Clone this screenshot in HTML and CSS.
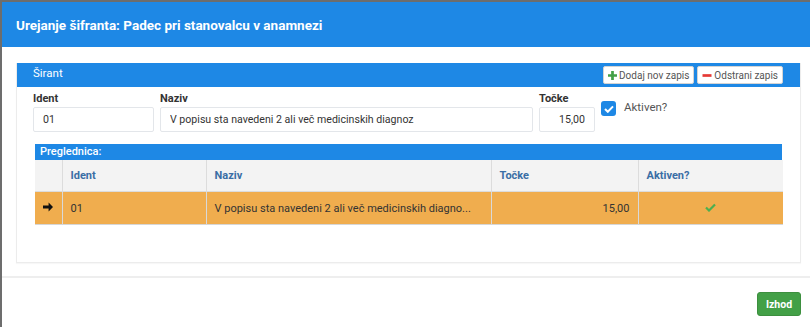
FILE: index.html
```html
<!DOCTYPE html>
<html>
<head>
    <title>Urejanje šifranta</title>
    <link rel="stylesheet" href="styles.css">
</head>
<body>
    <div class="modal">
        <div class="modal-header">
            <h1>Urejanje šifranta: Padec pri stanovalcu v anamnezi</h1>
        </div>

        <div class="modal-body">
            <div class="panel">
                <div class="panel-heading">
                    <span>Širant</span>
                    <div class="panel-tools">
                        <button class="btn-tool">
                            <svg width="9" height="9" viewBox="0 0 10 10"><path d="M3.5 0h3v3.5H10v3H6.5V10h-3V6.5H0v-3h3.5z" fill="#43a047"/></svg>
                            Dodaj nov zapis
                        </button>
                        <button class="btn-tool">
                            <svg width="10" height="9" viewBox="0 0 10 10"><path d="M0 3.5h10v3H0z" fill="#e53935"/></svg>
                            Odstrani zapis
                        </button>
                    </div>
                </div>

                <div class="panel-body">
                    <div class="form-row">
                        <div class="field">
                            <label>Ident</label>
                            <input class="input" type="text" value="01">
                        </div>
                        <div class="field">
                            <label>Naziv</label>
                            <input class="input" type="text" value="V popisu sta navedeni 2 ali več medicinskih diagnoz">
                        </div>
                        <div class="field">
                            <label>Točke</label>
                            <input class="input input-num" type="text" value="15,00">
                        </div>
                        <div class="check-field">
                            <span class="checkbox">
                                <svg width="10" height="8" viewBox="0 0 10 8"><path d="M1 4l2.8 2.8L9 1.4" fill="none" stroke="#fff" stroke-width="2"/></svg>
                            </span>
                            <span class="check-label">Aktiven?</span>
                        </div>
                    </div>

                    <div class="grid">
                        <div class="grid-title">Preglednica:</div>
                        <table>
                            <colgroup>
                                <col style="width: 27px">
                                <col style="width: 144px">
                                <col style="width: 285px">
                                <col style="width: 147px">
                                <col style="width: 145px">
                            </colgroup>
                            <thead>
                                <tr>
                                    <th></th>
                                    <th>Ident</th>
                                    <th>Naziv</th>
                                    <th>Točke</th>
                                    <th>Aktiven?</th>
                                </tr>
                            </thead>
                            <tbody>
                                <tr class="selected">
                                    <td class="cell-arrow">
                                        <svg width="10" height="10" viewBox="0 0 10 10"><path d="M0 3.6h5.6V.6L10 5 5.6 9.4v-3H0z" fill="#111"/></svg>
                                    </td>
                                    <td>01</td>
                                    <td>V popisu sta navedeni 2 ali več medicinskih diagno...</td>
                                    <td class="cell-num">15,00</td>
                                    <td class="cell-center">
                                        <svg width="11" height="9" viewBox="0 0 11 9"><path d="M1 4.5l3 3L10 1.5" fill="none" stroke="#4caf50" stroke-width="2.2"/></svg>
                                    </td>
                                </tr>
                            </tbody>
                        </table>
                    </div>
                </div>
            </div>
        </div>

        <div class="modal-footer">
            <button class="btn-exit">Izhod</button>
        </div>
    </div>
</body>
</html>
```

FILE: styles.css
```css
body {
    font-family: Roboto, 'Liberation Sans', sans-serif;
    margin: 0;
    padding: 2px 0 0 2px;
    height: 327px;
    box-sizing: border-box;
    background-color: #6d6d6d;
    color: #333;
    overflow: hidden;
}

.modal {
    background: white;
    height: 100%;
}

.modal-header {
    height: 45px;
    display: flex;
    align-items: center;
    padding: 0 14px;
    background: #1e88e5;
}

.modal-header h1 {
    margin: 0;
    font-size: 13.5px;
    font-weight: 700;
    color: white;
}

.modal-body {
    padding: 16px 9px 13px 14px;
    border-bottom: 2px solid #eeeeee;
}

.panel {
    border: 1px solid #ececec;
    border-top: none;
    box-shadow: 0 1px 1px rgba(0, 0, 0, 0.03);
}

.panel-heading {
    height: 24px;
    display: flex;
    align-items: center;
    justify-content: space-between;
    padding: 0 17px 0 16px;
    background: #1e88e5;
    color: white;
    font-size: 11.5px;
}

.panel-heading span {
    margin-top: -4px;
}

.panel-tools {
    display: flex;
    gap: 3px;
}

.btn-tool {
    display: flex;
    align-items: center;
    gap: 2px;
    height: 18px;
    padding: 0 4px;
    background: white;
    border: 1px solid #d4d4d4;
    border-radius: 2px;
    font-family: Roboto, 'Liberation Sans', sans-serif;
    font-size: 10px;
    color: #555;
}

.panel-body {
    padding: 5px 18px 37px 16px;
}

.form-row {
    display: grid;
    grid-template-columns: 121px 373px 56px auto;
    gap: 6px;
    align-items: start;
}

.field label {
    display: block;
    font-size: 11px;
    font-weight: 700;
    line-height: 14px;
    margin-bottom: 1px;
    color: #333;
}

.input {
    display: block;
    width: 100%;
    height: 25px;
    box-sizing: border-box;
    padding: 0 9px;
    border: 1px solid #e3e6ea;
    border-radius: 2px;
    font-family: Roboto, 'Liberation Sans', sans-serif;
    font-size: 10.6px;
    color: #333;
}

.input-num {
    text-align: right;
}

.check-field {
    display: flex;
    align-items: center;
    gap: 8px;
    margin-top: 9px;
}

.checkbox {
    width: 15px;
    height: 15px;
    border-radius: 3px;
    background: #1e88e5;
    display: flex;
    align-items: center;
    justify-content: center;
}

.check-label {
    font-size: 11.5px;
    color: #555;
    margin-top: -3px;
}

.grid {
    margin: 12px 0 0 2px;
}

.grid-title {
    height: 16px;
    line-height: 16px;
    padding-left: 5px;
    background: #1e88e5;
    color: white;
    font-size: 11px;
    font-weight: 500;
}

table {
    width: 100%;
    border-collapse: collapse;
    table-layout: fixed;
    font-size: 11px;
}

th {
    height: 31px;
    padding: 0 8px;
    text-align: left;
    background: #f3f3f3;
    color: #3a6ea5;
    font-weight: 700;
    border-left: 1px solid #dcdcdc;
    border-bottom: 1px solid #dcdcdc;
}

th:first-child,
td:first-child {
    border-left: none;
}

td {
    height: 32px;
    padding: 0 8px;
    border-left: 1px solid #d9d9d9;
    border-bottom: 1px solid #d6d6d6;
    white-space: nowrap;
    overflow: hidden;
}

.selected td {
    background: #f0ad4e;
    color: #333;
}

.cell-arrow {
    text-align: center;
}

.cell-num {
    text-align: right;
}

.cell-center {
    text-align: center;
}

.modal-footer {
    display: flex;
    justify-content: flex-end;
    padding: 14px 9px 0 0;
}

.btn-exit {
    width: 44px;
    height: 24px;
    padding: 0;
    border: 1px solid #3d8f3f;
    border-radius: 3px;
    background: #43a047;
    color: white;
    font-family: Roboto, 'Liberation Sans', sans-serif;
    font-size: 10.5px;
    font-weight: 700;
}
```
